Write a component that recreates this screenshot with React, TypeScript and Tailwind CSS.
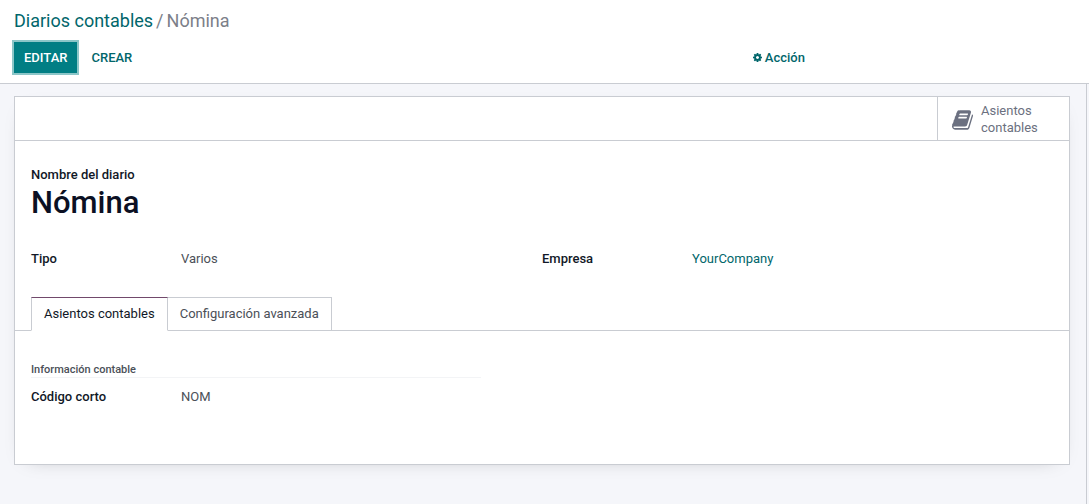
import React from "react";

function CogIcon() {
  return (
    <svg viewBox="0 -1408 1536 1536" className="size-[9px]" fill="currentColor" aria-hidden="true">
      <path
        transform="scale(1,-1)"
        d="M1024 640q0 106 -75 181t-181 75t-181 -75t-75 -181t75 -181t181 -75t181 75t75 181zM1536 749v-222q0 -12 -8 -23t-20 -13l-185 -28q-19 -54 -39 -91q35 -50 107 -138q10 -12 10 -25t-9 -23q-27 -37 -99 -108t-94 -71q-12 0 -26 9l-138 108q-44 -23 -91 -38q-16 -136 -29 -186q-7 -28 -36 -28h-222q-14 0 -24.5 8.5t-11.5 21.5l-28 184q-49 16 -90 37l-141 -107q-10 -9 -25 -9q-14 0 -25 11q-126 114 -165 168q-7 10 -7 23q0 12 8 23q15 21 51 66.5t54 70.5q-27 50 -41 99l-183 27q-13 2 -21 12.5t-8 23.5v222q0 12 8 23t19 13l186 28q14 46 39 92q-40 57 -107 138q-10 12 -10 24q0 10 9 23q26 36 98.5 107.5t94.5 71.5q13 0 26 -10l138 -107q44 23 91 38q16 136 29 186q7 28 36 28h222q14 0 24.5 -8.5t11.5 -21.5l28 -184q49 -16 90 -37l142 107q9 9 24 9q13 0 25 -10q129 -119 165 -170q7 -8 7 -22q0 -12 -8 -23q-15 -21 -51 -66.5t-54 -70.5q26 -50 41 -98l183 -28q13 -2 21 -12.5t8 -23.5z"
      />
    </svg>
  );
}

function BookIcon() {
  return (
    <svg viewBox="0 -1408 1664 1536" className="mt-0.5 h-[20px] w-[21px] shrink-0" fill="currentColor" aria-hidden="true">
      <path
        transform="scale(1,-1)"
        d="M1639 1058q40 -57 18 -129l-275 -906q-19 -64 -76.5 -107.5t-122.5 -43.5h-923q-77 0 -148.5 53.5t-99.5 131.5q-24 67 -2 127q0 4 3 27t4 37q1 8 -3 21.5t-3 19.5q2 11 8 21t16.5 23.5t16.5 23.5q23 38 45 91.5t30 91.5q3 10 0.5 30t-0.5 28q3 11 17 28t17 23q21 36 42 92t25 90q1 9 -2.5 32t0.5 28q4 13 22 30.5t22 22.5q19 26 42.5 84.5t27.5 96.5q1 8 -3 25.5t-2 26.5q2 8 9 18t18 23t17 21q8 12 16.5 30.5t15 35t16 36t19.5 32t26.5 23.5t36 11.5t47.5 -5.5l-1 -3q38 9 51 9h761q74 0 114 -56t18 -130l-274 -906q-36 -119 -71.5 -153.5t-128.5 -34.5h-869q-27 0 -38 -15q-11 -16 -1 -43q24 -70 144 -70h923q29 0 56 15.5t35 41.5l300 987q7 22 5 57q38 -15 59 -43zM575 1056q-4 -13 2 -22.5t20 -9.5h608q13 0 25.5 9.5t16.5 22.5l21 64q4 13 -2 22.5t-20 9.5h-608q-13 0 -25.5 -9.5t-16.5 -22.5zM492 800q-4 -13 2 -22.5t20 -9.5h608q13 0 25.5 9.5t16.5 22.5l21 64q4 13 -2 22.5t-20 9.5h-608q-13 0 -25.5 -9.5t-16.5 -22.5z"
      />
    </svg>
  );
}

function Field({ label, children }: { label: string; children: React.ReactNode }) {
  return (
    <div className="flex leading-5">
      <dt className="w-[150px] shrink-0 font-medium text-[#111827]">{label}</dt>
      <dd className="text-[#4b5058]">{children}</dd>
    </div>
  );
}

export default function App() {
  return (
    <div className="flex min-h-screen flex-col bg-[#f5f6fa] font-[Roboto,sans-serif] text-[13px] text-[#4b5058]">
      <header className="border-b border-[#c9ccd2] bg-white px-3 pt-2 pb-2">
        <nav aria-label="Ruta" className="flex gap-[3px] px-0.5 text-lg leading-[26px] text-[#7c7f89]">
          <a href="#diarios" className="text-[#01666b]">Diarios contables</a>
          <span>/</span>
          <span>Nómina</span>
        </nav>
        <div className="mt-1.5 flex items-center">
          <div className="flex w-[69%] items-center gap-0.5">
            <button className="h-[35px] border-2 border-[#8cc6c8] bg-[#017e84] px-2.5 font-medium text-white">EDITAR</button>
            <button className="h-[35px] px-2.5 font-medium text-[#01666b]">CREAR</button>
          </div>
          <button className="flex h-[35px] items-center gap-[3px] px-1.5 font-medium text-[#01666b]">
            <CogIcon />
            Acción
          </button>
        </div>
      </header>

      <main className="mr-0.5 flex-1 border-r border-[#c9ccd2] pt-3 pr-4 pb-10 pl-3.5">
        <section className="border border-[#c9ccd2] bg-white shadow-[0_5px_20px_-15px_rgba(0,0,0,0.4)]">
          <div className="flex justify-end border-b border-[#c9ccd2]">
            <button className="flex h-[43px] w-[132px] items-center gap-2 border-l border-[#c9ccd2] pl-3.5 text-left leading-[17px] text-[#6b7080]">
              <BookIcon />
              <span className="w-16">Asientos contables</span>
            </button>
          </div>

          <div className="px-4 pt-6">
            <p className="leading-5 font-medium text-[#111827]">Nombre del diario</p>
            <h1 className="text-[31px] leading-[35px] font-medium text-[#0b1023]">Nómina</h1>
            <dl className="mt-[29px] grid grid-cols-2">
              <Field label="Tipo">Varios</Field>
              <Field label="Empresa">
                <a href="#empresa" className="text-[#01666b]">YourCompany</a>
              </Field>
            </dl>
          </div>

          <div role="tablist" className="mt-7 flex border-b border-[#c9ccd2] px-4">
            <button role="tab" aria-selected="true" className="-mb-px h-[34px] border border-t-[#71496b] border-r-[#c9ccd2] border-b-white border-l-[#c9ccd2] bg-white px-3 text-[#111827]">
              Asientos contables
            </button>
            <button role="tab" aria-selected="false" className="h-[33px] border-t border-r border-[#c9ccd2] px-3 text-[#4b5058]">
              Configuración avanzada
            </button>
          </div>

          <div role="tabpanel" className="px-4 pt-[31px] pb-[57px]">
            <h2 className="w-[44%] border-b border-[#f3f4f6] text-[11px] leading-[15px] font-medium text-[#4b5058]">
              Información contable
            </h2>
            <dl className="mt-[9px]">
              <Field label="Código corto">NOM</Field>
            </dl>
          </div>
        </section>
      </main>
    </div>
  );
}
